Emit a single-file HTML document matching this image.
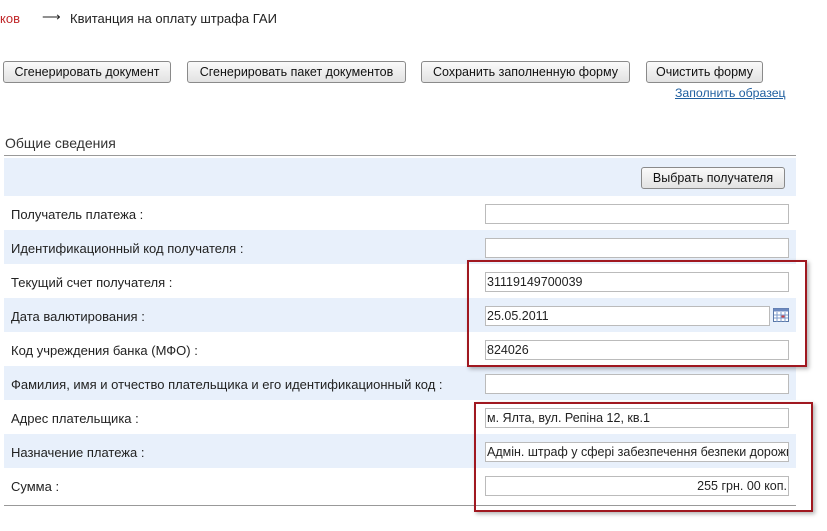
<!DOCTYPE html>
<html><head><meta charset="utf-8"><style>
body{margin:0;width:827px;height:531px;background:#fff;font-family:"Liberation Sans",sans-serif;font-size:13px;color:#222;position:relative;overflow:hidden}
.a{position:absolute;white-space:nowrap}
.btn{position:absolute;height:20px;border:1px solid #8a8a8a;border-radius:3px;background:linear-gradient(#fafafa,#e2e2e2);font-size:12.5px;line-height:20px;text-align:center;color:#111}
.row{position:absolute;left:4px;width:792px;height:34px}
.b{background:#e8f0fb}
.lbl{position:absolute;left:7px;top:11px;font-size:13px}
.inp{position:absolute;left:485px;width:304px;height:20px;border:1px solid #bbb;background:#fff;font-size:12.5px;line-height:19px;padding:0 1px;box-sizing:border-box;overflow:hidden;white-space:nowrap}
.red{position:absolute;border:2px solid #a01820;box-shadow:2px 2px 4px rgba(0,0,0,.3)}
</style></head><body>
<div class="a" style="left:0;top:11px;color:#c0282a">ков</div>
<div class="a" style="left:42px;top:9px;font-size:13px">⟶</div>
<div class="a" style="left:70px;top:11px">Квитанция на оплату штрафа ГАИ</div>
<div class="btn" style="left:3px;top:61px;width:166px">Сгенерировать документ</div>
<div class="btn" style="left:187px;top:61px;width:217px">Сгенерировать пакет документов</div>
<div class="btn" style="left:421px;top:61px;width:207px">Сохранить заполненную форму</div>
<div class="btn" style="left:646px;top:61px;width:115px">Очистить форму</div>
<div class="a" style="left:675px;top:86px;font-size:12.3px;color:#1f5fa0;text-decoration:underline">Заполнить образец</div>
<div class="a" style="left:5px;top:135px;font-size:14px;color:#333">Общие сведения</div>
<div class="a" style="left:4px;top:155px;width:792px;border-top:1px solid #999"></div>
<div class="row b" style="top:158px;height:38px"></div>
<div class="btn" style="left:641px;top:167px;width:142px">Выбрать получателя</div>
<div class="row" style="top:196px"><div class="lbl">Получатель платежа :</div></div>
<div class="row b" style="top:230px"><div class="lbl">Идентификационный код получателя :</div></div>
<div class="row" style="top:264px"><div class="lbl">Текущий счет получателя :</div></div>
<div class="row b" style="top:298px"><div class="lbl">Дата валютирования :</div></div>
<div class="row" style="top:332px"><div class="lbl">Код учреждения банка (МФО) :</div></div>
<div class="row b" style="top:366px"><div class="lbl">Фамилия, имя и отчество плательщика и его идентификационный код :</div></div>
<div class="row" style="top:400px"><div class="lbl">Адрес плательщика :</div></div>
<div class="row b" style="top:434px"><div class="lbl">Назначение платежа :</div></div>
<div class="row" style="top:468px"><div class="lbl">Сумма :</div></div>
<div class="a" style="left:4px;top:505px;width:792px;border-top:1px solid #999"></div>
<div class="inp" style="top:204px"></div>
<div class="inp" style="top:238px"></div>
<div class="inp" style="top:272px">31119149700039</div>
<div class="inp" style="top:306px;width:285px">25.05.2011</div>
<svg class="a" style="left:773px;top:307px" width="16" height="16" viewBox="0 0 16 16"><rect x="0.5" y="1.5" width="15" height="13" fill="#fff" stroke="#5a78a8"/><rect x="0.5" y="1.5" width="15" height="3" fill="#6d8ac0"/><path d="M4 5v10M8 5v10M12 5v10M1 8h14M1 11h14" stroke="#7f9ccc"/><rect x="8.5" y="8.5" width="3" height="2" fill="#d04040"/></svg>
<div class="inp" style="top:340px">824026</div>
<div class="inp" style="top:374px"></div>
<div class="inp" style="top:408px">м. Ялта, вул. Репіна 12, кв.1</div>
<div class="inp" style="top:442px">Адмін. штраф у сфері забезпечення безпеки дорожнього руху</div>
<div class="inp" style="top:476px;text-align:right">255 грн. 00 коп.</div>
<div class="red" style="left:467px;top:260px;width:336px;height:103px"></div>
<div class="red" style="left:474px;top:402px;width:335px;height:106px"></div>
</body></html>
